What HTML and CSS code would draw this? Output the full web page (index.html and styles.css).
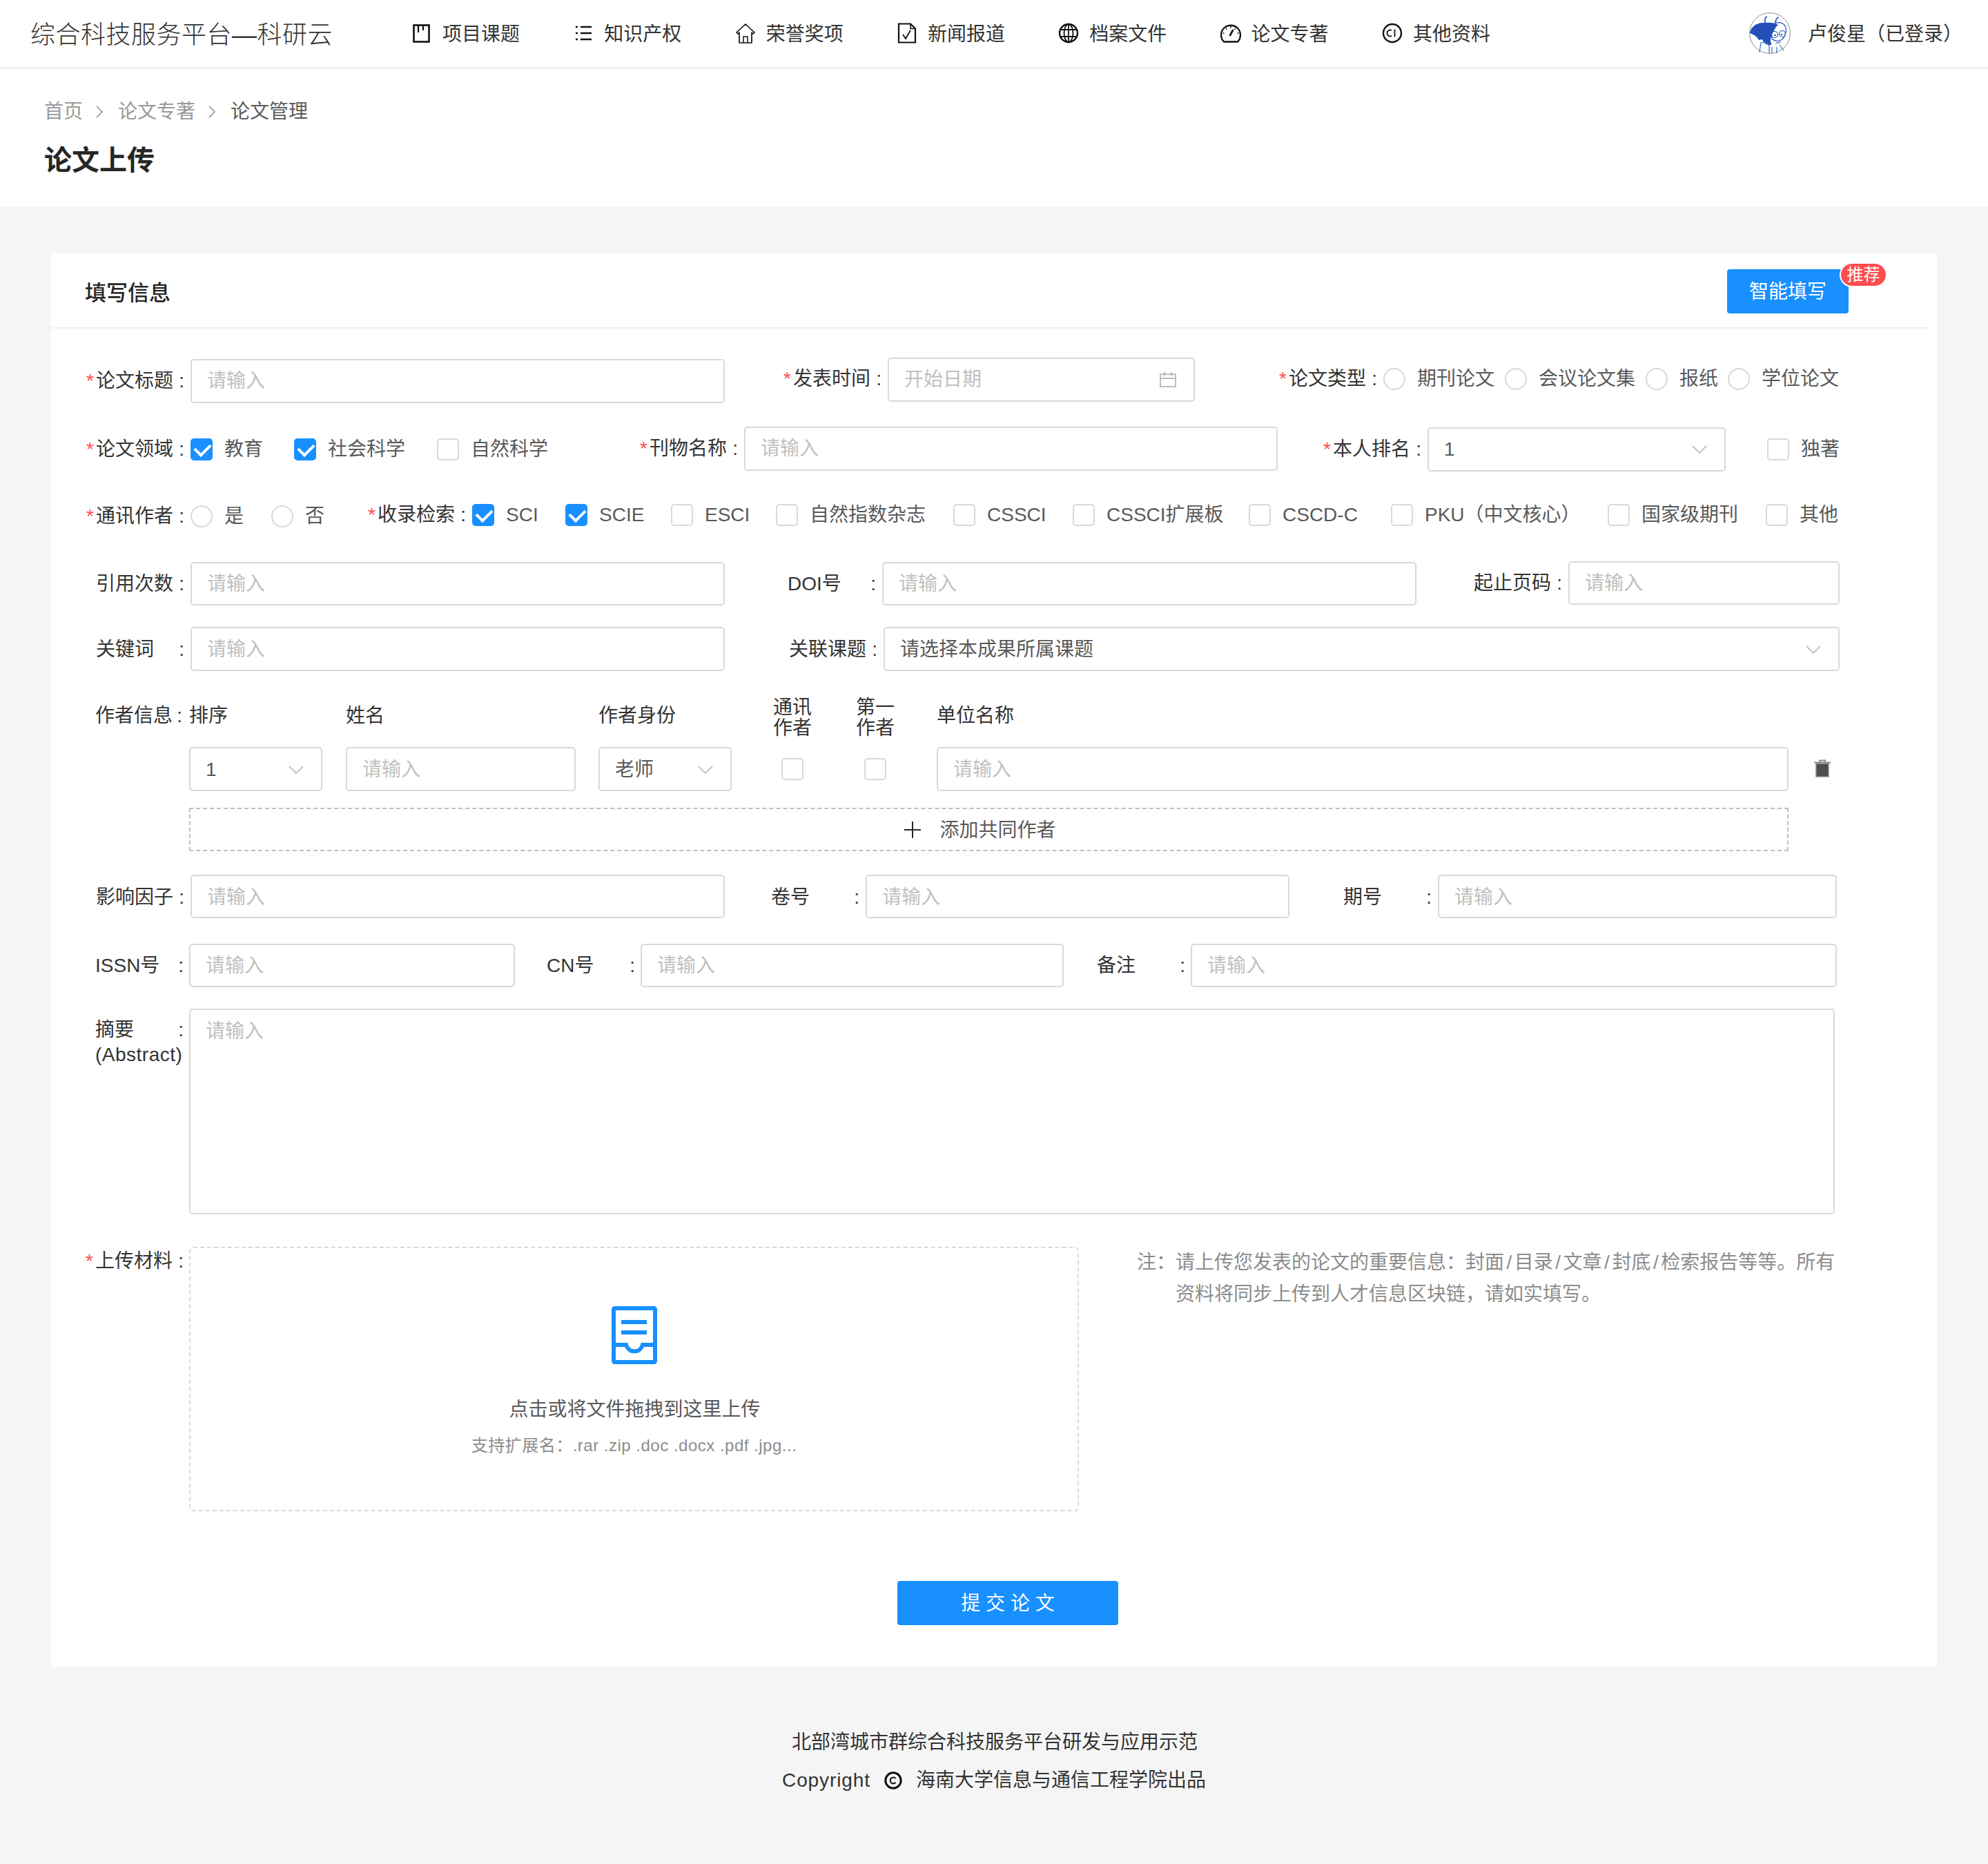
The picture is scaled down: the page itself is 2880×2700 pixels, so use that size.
FILE: index.html
```html
<!DOCTYPE html>
<html lang="zh-CN">
<head>
<meta charset="utf-8">
<title>论文上传</title>
<link rel="stylesheet" href="styles.css">
</head>
<body>
<header class="topbar">
  <div class="logo">综合科技服务平台—科研云</div>
  <nav class="nav">
    <a class="nav-item"><svg class="ico" viewBox="0 0 30 30"><rect x="3.5" y="3.5" width="22" height="24" fill="none" stroke="#111" stroke-width="2.6"/><path d="M10 4v10M17 4v7" stroke="#111" stroke-width="2.2" fill="none"/></svg><span class="nav-tx">项目课题</span></a>
    <a class="nav-item"><svg class="ico" viewBox="0 0 30 30"><path d="M4 6h3M4 15h3M4 24h3M11 6h16M11 15h16M11 24h16" stroke="#111" stroke-width="2.6" fill="none"/></svg><span class="nav-tx">知识产权</span></a>
    <a class="nav-item"><svg class="ico" viewBox="0 0 30 30"><path d="M15 2 2 14l2 2 2-2v15h18V14l2 2 2-2Z" fill="none" stroke="#111" stroke-width="1.7" stroke-linejoin="round"/><path d="M12 29v-9h6v9" fill="none" stroke="#111" stroke-width="1.5"/></svg><span class="nav-tx">荣誉奖项</span></a>
    <a class="nav-item"><svg class="ico" viewBox="0 0 30 30"><path d="M3 1.5h17l7 7v20H3Z" fill="none" stroke="#111" stroke-width="2.2"/><path d="M20 1.5v7h7" fill="none" stroke="#111" stroke-width="1.6"/><path d="M9 17l4 6 7-12" fill="none" stroke="#111" stroke-width="1.8"/></svg><span class="nav-tx">新闻报道</span></a>
    <a class="nav-item"><svg class="ico" viewBox="0 0 30 30"><circle cx="15" cy="15" r="13" fill="none" stroke="#111" stroke-width="2.4"/><ellipse cx="15" cy="15" rx="6.5" ry="13" fill="none" stroke="#111" stroke-width="1.8"/><path d="M15 2v26M3 10h24M3 20h24" fill="none" stroke="#111" stroke-width="1.8"/></svg><span class="nav-tx">档案文件</span></a>
    <a class="nav-item"><svg class="ico" viewBox="0 0 30 30"><path d="M5 27.5a14 14 0 1 1 20 0Z" fill="none" stroke="#111" stroke-width="2.4" stroke-linejoin="round"/><path d="M13.5 19 18.5 10" stroke="#111" stroke-width="2.6" fill="none"/><path d="M15 4.5v3M5.5 15h-2M26.5 15h-2M8 8l1.5 1.5M22 8l-1.500 1.500" stroke="#111" stroke-width="1.5" fill="none"/></svg><span class="nav-tx">论文专著</span></a>
    <a class="nav-item"><svg class="ico" viewBox="0 0 30 30"><circle cx="15" cy="15" r="13" fill="none" stroke="#111" stroke-width="2.4"/><path d="M14 11a4.5 4.5 0 1 0 0 8M18.5 9.5v11" fill="none" stroke="#111" stroke-width="1.8"/></svg><span class="nav-tx">其他资料</span></a>
  </nav>
  <div class="user">
    <svg class="avatar" viewBox="0 0 60 60">
      <circle cx="30" cy="30" r="29.4" fill="#fff" stroke="#8c8c8c" stroke-width="1"/>
      <path d="M24 17c-2-4-2-10 2-11M38 17c0-5 1-9 5-10" fill="none" stroke="#2350b8" stroke-width="1.6"/>
      <path d="M33 38c6 6 15 3 18-3 4-8 3-14-1-18-5-3-10-3-14 0l-5 9Z" fill="#fff" stroke="#2350b8" stroke-width="1.2"/>
      <path d="M1 30c1-8 8-15 20-15 9-1 17 0 21 3-3 2-7 9-10 16-1 4-2 9 1 13-9 1-12-3-14-8l-5 1c-3-6-8-8-13-10Z" fill="#2350b8"/>
      <circle cx="37" cy="32" r="4.5" fill="none" stroke="#2350b8" stroke-width="1.2"/><circle cx="48" cy="31" r="4.5" fill="none" stroke="#2350b8" stroke-width="1.2"/><circle cx="37.500" cy="33" r="1.300" fill="#2350b8"/><circle cx="47" cy="32" r="1.300" fill="#2350b8"/>
      <path d="M39 44c3 1 5 0 6-2" fill="none" stroke="#2350b8" stroke-width="1.300"/>
      <path d="M15 58 17 44l8-1 4 6v10M33 50v9M40 50v9M44 47l6 8" fill="none" stroke="#2f6fd0" stroke-width="1.200"/>
    </svg>
    <span class="nav-tx">卢俊星（已登录）</span>
  </div>
</header>

<section class="pagehead">
  <div class="crumbs">
    <span class="crumb">首页</span>
    <svg class="crumb-sep" viewBox="0 0 12 20"><path d="M2 2l8 8-8 8" fill="none" stroke="#8c8c8c" stroke-width="1.5"/></svg>
    <span class="crumb">论文专著</span>
    <svg class="crumb-sep" viewBox="0 0 12 20"><path d="M2 2l8 8-8 8" fill="none" stroke="#8c8c8c" stroke-width="1.5"/></svg>
    <span class="crumb crumb-cur">论文管理</span>
  </div>
  <h1 class="pagetitle">论文上传</h1>
</section>

<main class="card">
  <div class="card-head">
    <h2 class="card-title">填写信息</h2>
    <div class="smart">智能填写<span class="badge">推荐</span></div>
  </div>

  <form class="form">
    <div class="row r1">
      <div class="lbl"><span><i class="req">*</i>论文标题</span><span>:</span></div>
      <input class="ctl" placeholder="请输入">
      <div class="lbl up3"><span><i class="req">*</i>发表时间</span><span>:</span></div>
      <div class="ctl box up2"><span class="ph">开始日期</span>
        <svg class="cal" viewBox="0 0 26 24"><path d="M2 4h22v18H2ZM2 10h22M8 1v6M18 1v6" fill="none" stroke="#bfbfbf" stroke-width="2"/></svg></div>
      <div class="lbl up3"><span><i class="req">*</i>论文类型</span><span>:</span></div>
      <div class="opts o-type up3">
        <div class="opt"><span class="rd"></span><span>期刊论文</span></div>
        <div class="opt"><span class="rd"></span><span>会议论文集</span></div>
        <div class="opt"><span class="rd"></span><span>报纸</span></div>
        <div class="opt"><span class="rd"></span><span>学位论文</span></div>
      </div>
    </div>

    <div class="row r2">
      <div class="lbl"><span><i class="req">*</i>论文领域</span><span>:</span></div>
      <div class="opts o-area">
        <div class="opt"><span class="cb on"></span><span>教育</span></div>
        <div class="opt"><span class="cb on"></span><span>社会科学</span></div>
        <div class="opt"><span class="cb"></span><span>自然科学</span></div>
      </div>
      <div class="lbl up1"><span><i class="req">*</i>刊物名称</span><span>:</span></div>
      <input class="ctl up1" placeholder="请输入">
      <div class="lbl"><span><i class="req">*</i>本人排名</span><span>:</span></div>
      <div class="ctl box sel"><span class="val">1</span><svg class="chev" viewBox="0 0 22 12"><path d="M1 1l10 10L21 1" fill="none" stroke="#bfbfbf" stroke-width="1.800"/></svg></div>
      <div class="opt solo"><span class="cb"></span><span>独著</span></div>
    </div>

    <div class="row r3">
      <div class="lbl"><span><i class="req">*</i>通讯作者</span><span>:</span></div>
      <div class="opt"><span class="rd"></span><span>是</span></div>
      <div class="opt"><span class="rd"></span><span>否</span></div>
      <div class="lbl up2"><span><i class="req">*</i>收录检索</span><span>:</span></div>
      <div class="opt up2"><span class="cb on"></span><span>SCI</span></div>
      <div class="opt up2"><span class="cb on"></span><span>SCIE</span></div>
      <div class="opt up2"><span class="cb"></span><span>ESCI</span></div>
      <div class="opt up2"><span class="cb"></span><span>自然指数杂志</span></div>
      <div class="opt up2"><span class="cb"></span><span>CSSCI</span></div>
      <div class="opt up2"><span class="cb"></span><span>CSSCI扩展板</span></div>
      <div class="opt up2"><span class="cb"></span><span>CSCD-C</span></div>
      <div class="opt up2"><span class="cb"></span><span>PKU（中文核心）</span></div>
      <div class="opt up2"><span class="cb"></span><span>国家级期刊</span></div>
      <div class="opt up2"><span class="cb"></span><span>其他</span></div>
    </div>

    <div class="row r4">
      <div class="lbl"><span>引用次数</span><span>:</span></div>
      <input class="ctl" placeholder="请输入">
      <div class="lbl"><span>DOI号</span><span>:</span></div>
      <input class="ctl" placeholder="请输入">
      <div class="lbl up1"><span>起止页码</span><span>:</span></div>
      <input class="ctl up1" placeholder="请输入">
    </div>

    <div class="row r5">
      <div class="lbl"><span>关键词</span><span>:</span></div>
      <input class="ctl" placeholder="请输入">
      <div class="lbl"><span>关联课题</span><span>:</span></div>
      <div class="ctl box sel"><span class="val">请选择本成果所属课题</span><svg class="chev" viewBox="0 0 22 12"><path d="M1 1l10 10L21 1" fill="none" stroke="#bfbfbf" stroke-width="1.800"/></svg></div>
    </div>

    <div class="authors">
      <div class="lbl a-lbl"><span>作者信息</span><span>:</span></div>
      <div class="a-h">排序</div>
      <div class="a-h">姓名</div>
      <div class="a-h">作者身份</div>
      <div class="a-h a-two">通讯<br>作者</div>
      <div class="a-h a-two">第一<br>作者</div>
      <div class="a-h">单位名称</div>
      <div></div>

      <div></div>
      <div class="ctl box sel a-sel"><span class="val">1</span><svg class="chev" viewBox="0 0 22 12"><path d="M1 1l10 10L21 1" fill="none" stroke="#bfbfbf" stroke-width="1.800"/></svg></div>
      <input class="ctl a-name" placeholder="请输入">
      <div class="ctl box sel a-sel"><span class="val">老师</span><svg class="chev" viewBox="0 0 22 12"><path d="M1 1l10 10L21 1" fill="none" stroke="#bfbfbf" stroke-width="1.800"/></svg></div>
      <div class="a-check"><span class="cb"></span></div>
      <div class="a-check"><span class="cb"></span></div>
      <input class="ctl a-unit" placeholder="请输入">
      <svg class="trash" viewBox="0 0 24 26"><path d="M8 4V1.500h8V4" fill="none" stroke="#8c8c8c" stroke-width="2"/><path d="M0 4.500h24" stroke="#8c8c8c" stroke-width="2"/><path d="M3 6h18v19H3Z" fill="#4d4d4d" stroke="#8c8c8c" stroke-width="1.500"/></svg>

      <div></div>
      <div class="add">
        <svg class="plus" viewBox="0 0 30 24"><path d="M15 0v24M3 12h24" stroke="#262626" stroke-width="2" fill="none"/></svg>
        <span class="add-tx">添加共同作者</span>
      </div>
    </div>

    <div class="row r7">
      <div class="lbl"><span>影响因子</span><span>:</span></div>
      <input class="ctl" placeholder="请输入">
      <div class="lbl"><span>卷号</span><span>:</span></div>
      <input class="ctl" placeholder="请输入">
      <div class="lbl"><span>期号</span><span>:</span></div>
      <input class="ctl" placeholder="请输入">
    </div>

    <div class="row r8">
      <div class="lbl"><span>ISSN号</span><span>:</span></div>
      <input class="ctl" placeholder="请输入">
      <div class="lbl"><span>CN号</span><span>:</span></div>
      <input class="ctl" placeholder="请输入">
      <div class="lbl"><span>备注</span><span>:</span></div>
      <input class="ctl" placeholder="请输入">
    </div>

    <div class="row r9">
      <div class="lbl lbl-tall"><span>摘要</span><span>:</span><span class="lbl-full">(Abstract)</span></div>
      <textarea class="ctl area" placeholder="请输入"></textarea>
    </div>

    <div class="row r10">
      <div class="lbl lbl-top"><span><i class="req">*</i>上传材料</span><span>:</span></div>
      <div class="drop">
        <svg class="drop-ico" viewBox="0 0 66 84"><rect x="3" y="3" width="60" height="78" rx="1.500" fill="none" stroke="#1890ff" stroke-width="6"/><path d="M14 23h37M14 38h37" stroke="#1890ff" stroke-width="6" fill="none"/><path d="M3 56h18a12.500 13 0 0 0 24 0h18" fill="none" stroke="#1890ff" stroke-width="6"/></svg>
        <p class="drop-main">点击或将文件拖拽到这里上传</p>
        <p class="drop-sub">支持扩展名：.rar .zip .doc .docx .pdf .jpg...</p>
      </div>
      <div class="note">
        <p class="note-l1"><span>注：请上传您发表的论文的重要信息：封面</span><span class="sl">/</span><span>目录</span><span class="sl">/</span><span>文章</span><span class="sl">/</span><span>封底</span><span class="sl">/</span><span>检索报告等等。所有</span></p>
        <p class="note-l2">资料将同步上传到人才信息区块链，请如实填写。</p>
      </div>
    </div>

    <div class="submit">提 交 论 文</div>
  </form>
</main>

<footer class="foot">
  <p>北部湾城市群综合科技服务平台研发与应用示范</p>
  <p class="foot-2"><span class="foot-copy">Copyright</span>
    <svg class="copy" viewBox="0 0 26 26"><circle cx="13" cy="13" r="11.200" fill="none" stroke="#111" stroke-width="3"/><path d="M16.500 10a4.500 4.500 0 1 0 0 6" fill="none" stroke="#111" stroke-width="2"/></svg>
    <span>海南大学信息与通信工程学院出品</span></p>
</footer>
</body>
</html>
```
FILE: styles.css
```css
* { box-sizing: border-box; }
html, body { margin: 0; padding: 0; }
body {
  min-height: 2700px;
  background: #f5f5f5;
  font-family: "Liberation Sans", "Noto Sans CJK SC", sans-serif;
  font-size: 28px;
  line-height: 36px;
  color: #333;
}
p, h1, h2 { margin: 0; }

/* top bar */
.topbar {
  display: flex;
  align-items: center;
  height: 96px;
  padding: 0 37px 0 44px;
  background: #fff;
}
.logo {
  width: 552px;
  padding-top: 6px;
  font-size: 36px;
  font-weight: 300;
  letter-spacing: .5px;
  color: #333;
}
.nav { display: flex; gap: 77.3px; }
.nav-item { display: flex; align-items: center; gap: 15px; color: #333; }
.nav-tx { padding-top: 4px; }
.ico { width: 30px; height: 30px; }
.user { display: flex; align-items: center; gap: 25px; margin-left: auto; }
.avatar { width: 60px; height: 60px; }

/* page heading */
.pagehead {
  height: 200px;
  margin-top: 4px;
  padding: 44px 64px 0;
  background: #fff;
}
.crumbs { display: flex; align-items: center; }
.crumb { color: #999; }
.crumb-cur { color: #595959; }
.crumb-sep { width: 12px; height: 20px; margin: 0 21px 0 18px; }
.pagetitle {
  margin-top: 24px;
  font-size: 40px;
  line-height: 56px;
  font-weight: 700;
  color: #262626;
}

/* card */
.card {
  height: 2049px;
  margin: 66px 74px 0;
  background: #fff;
  border-radius: 4px;
}
.card-head {
  display: flex;
  justify-content: space-between;
  align-items: center;
  height: 110px;
  margin-right: 12px;
  padding: 24px 116px 20px 49px;
  border-bottom: 2px solid #f0f0f0;
}
.card-title { padding-top: 6px; font-size: 31px; line-height: 40px; font-weight: 500; color: #262626; }
.smart {
  position: relative;
  width: 176px;
  height: 64px;
  line-height: 66px;
  text-align: center;
  color: #fff;
  background: #1890ff;
  border-radius: 4px;
}
.badge {
  position: absolute;
  top: -10px;
  right: -56px;
  width: 69px;
  height: 36px;
  font-size: 24px;
  line-height: 32px;
  color: #fff;
  background: #ff4d4f;
  border: 2px solid #fff;
  border-radius: 18px;
}

/* form */
.form { padding: 42px 0 0 64px; }
.row { display: grid; height: 64px; align-items: center; }
.r1 { grid-template-columns: 138px 774px 236px 445px 273px 1fr; }
.r2 { margin-top: 36px; grid-template-columns: 138px 524px 278px 773px 217px 432px 1fr; }
.r3 { margin-top: 34px; grid-template-columns: 138px 117px 100px 191px 135px 153px 152px 257px 173px 255px 206px 314px 229px 1fr; }
.r4 { margin-top: 33px; height: 63px; grid-template-columns: 138px 774px 228px 774px 220px 393px; }
.r5 { margin-top: 32px; grid-template-columns: 138px 774px 230px 1385px; }
.r7 { margin-top: 34px; height: 63px; grid-template-columns: 138px 774px 204px 614px 215px 578px; }
.r8 { margin-top: 37px; height: 63px; grid-template-columns: 136px 472px 182px 613px 184px 936px; }
.r9 { margin-top: 31px; height: 298px; align-items: start; grid-template-columns: 136px 2384px; }
.r10 { margin-top: 47px; height: 383px; align-items: start; grid-template-columns: 136px 1289px 1fr; }
.r4 .ctl, .r7 .ctl, .r8 .ctl { height: 63px; }

.lbl {
  justify-self: end;
  display: flex;
  justify-content: space-between;
  width: 128px;
  margin-right: 9px;
  white-space: nowrap;
}
.r8 .lbl, .r9 .lbl, .r10 .lbl { margin-right: 8px; }
.r5 .lbl, .r7 .lbl { margin-top: 2px; }
.r5 .ctl, .r7 .ctl, .authors .ctl { padding-top: 2px; }
.req {
  display: inline-block;
  width: 14px;
  margin-left: -14px;
  font-style: normal;
  color: #ff4d4f;
}
.lbl-tall { flex-wrap: wrap; margin-top: 13px; }
.lbl-full { flex-basis: 100%; letter-spacing: .5px; }
.lbl-top { margin-top: 3px; }

.ctl {
  width: 100%;
  height: 64px;
  padding: 0 22px;
  font: inherit;
  color: #595959;
  background: #fff;
  border: 2px solid #d9d9d9;
  border-radius: 5px;
  outline: 0;
}
.ctl::placeholder, .ph { color: #bfbfbf; }
.box { display: flex; align-items: center; justify-content: space-between; }
.ctl.area { height: 298px; padding: 13px 22px; resize: none; line-height: 36px; }
.cal { width: 26px; height: 24px; margin-right: 2px; }
.chev { width: 22px; height: 12px; margin-right: 3px; }
.val { color: #595959; }

.up1 { margin-bottom: 2px; }
.up2 { margin-bottom: 4px; }
.up3 { margin-bottom: 6px; }

.opts { display: grid; }
.o-type { grid-template-columns: 176px 204px 119px 1fr; }
.o-area { grid-template-columns: 150px 207px 1fr; }
.opt { display: flex; align-items: center; gap: 17px; color: #595959; white-space: nowrap; }
.solo { margin-left: 60px; }
.cb, .rd {
  flex: none;
  display: block;
  position: relative;
  width: 32px;
  height: 32px;
  background: #fff;
  border: 2px solid #d9d9d9;
  border-radius: 5px;
}
.rd { border-radius: 50%; }
.cb.on { background: #1890ff; border-color: #1890ff; }
.cb.on::after {
  content: "";
  position: absolute;
  left: 8px;
  top: 1px;
  width: 11px;
  height: 18px;
  border: solid #fff;
  border-width: 0 4px 4px 0;
  transform: rotate(45deg);
}

/* authors */
.authors {
  display: grid;
  grid-template-columns: 136px 227px 366px 253px 120px 117px 1234px 1fr;
  grid-template-rows: 73px 88px 63px;
  margin-top: 37px;
}
.a-lbl { height: 36px; margin: 10px 0 0 0; width: 126px; justify-self: start; }
.a-h { margin-top: 10px; white-space: nowrap; }
.a-two { margin-top: 1px; line-height: 30px; }
.a-sel { width: 193px; }
.a-name { width: 333px; }
.a-check { display: flex; justify-content: center; width: 56px; height: 64px; align-items: center; }
.trash { width: 24px; height: 26px; margin: 18px 0 0 37px; }
.add {
  grid-column: 2 / 8;
  display: flex;
  align-items: center;
  justify-content: center;
  gap: 24px;
  height: 63px;
  padding-right: 28px;
  color: #595959;
  border: 2px dashed #bfbfbf;
  border-radius: 2px;
}
.add-tx { padding-top: 2px; }
.plus { width: 30px; height: 24px; }

/* upload */
.drop {
  display: flex;
  flex-direction: column;
  align-items: center;
  height: 383px;
  padding-top: 84px;
  border: 2px dashed #d9d9d9;
  border-radius: 6px;
}
.drop-ico { width: 66px; height: 84px; }
.drop-main { margin: 48px 0 0 2px; color: #595959; }
.drop-sub { margin-top: 18px; font-size: 24px; line-height: 32px; letter-spacing: .5px; color: #8c8c8c; }
.note {
  margin-left: 84px;
  line-height: 46px;
  color: #8c8c8c;
}
.note-l1 { display: flex; white-space: nowrap; }
.note-l2 { padding-left: 56px; }
.sl { padding: 0 3.500px; }

.submit {
  width: 320px;
  height: 64px;
  margin: 101px 0 0 1162px;
  line-height: 66px;
  text-align: center;
  color: #fff;
  background: #1890ff;
  border-radius: 4px;
}

/* footer */
.foot { padding-top: 91px; text-align: center; color: #333; }
.foot > p:first-child { padding-left: 2px; }
.foot-2 { display: flex; justify-content: center; align-items: center; gap: 20px; margin-top: 19px; }
.foot-copy { letter-spacing: .9px; }
.copy { width: 26px; height: 26px; }
```
